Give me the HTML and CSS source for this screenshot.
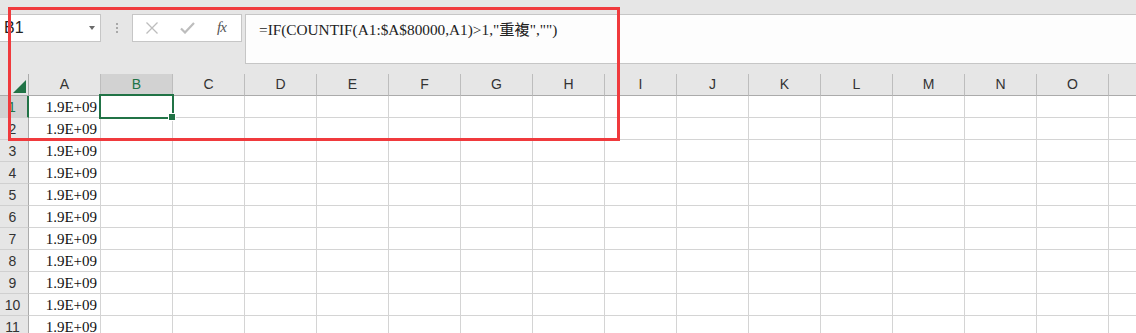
FILE: index.html
```html
<!DOCTYPE html>
<html lang="zh-Hant">
<head>
<meta charset="utf-8">
<title>Excel</title>
<link rel="stylesheet" href="styles.css">
</head>
<body>
<div class="app">
  <div class="fbar">
    <div class="namebox">
      <span class="name">B1</span>
      <span class="caret"></span>
    </div>
    <div class="grip"><i></i><i></i><i></i></div>
    <div class="btns">
      <svg class="ic" width="14" height="12" viewBox="0 0 14 12"><path d="M1.5 0.5 L12.5 11.5 M12.5 0.5 L1.5 11.5" stroke="#bdbdbd" stroke-width="1.3" fill="none"/></svg>
      <svg class="ic" width="15" height="12" viewBox="0 0 15 12"><path d="M1 6.5 L5 10.5 L14 1" stroke="#bdbdbd" stroke-width="2.2" fill="none"/></svg>
      <span class="fx">fx</span>
    </div>
    <div class="formula">=IF(COUNTIF(A1:$A$80000,A1)&gt;1,"重複","")</div>
  </div>
  <div class="sheet">
    <div class="corner"><svg width="13" height="13" viewBox="0 0 13 13"><path d="M13 0 L13 13 L0 13 Z" fill="#217346"/></svg></div>
    <div class="ch">A</div><div class="ch sel">B</div><div class="ch">C</div><div class="ch">D</div><div class="ch">E</div><div class="ch">F</div><div class="ch">G</div><div class="ch">H</div><div class="ch">I</div><div class="ch">J</div><div class="ch">K</div><div class="ch">L</div><div class="ch">M</div><div class="ch">N</div><div class="ch">O</div><div class="ch"></div>

    <div class="rh sel">1</div><div class="c num">1.9E+09</div><div class="c"></div><div class="c"></div><div class="c"></div><div class="c"></div><div class="c"></div><div class="c"></div><div class="c"></div><div class="c"></div><div class="c"></div><div class="c"></div><div class="c"></div><div class="c"></div><div class="c"></div><div class="c"></div><div class="c"></div>
    <div class="rh">2</div><div class="c num">1.9E+09</div><div class="c"></div><div class="c"></div><div class="c"></div><div class="c"></div><div class="c"></div><div class="c"></div><div class="c"></div><div class="c"></div><div class="c"></div><div class="c"></div><div class="c"></div><div class="c"></div><div class="c"></div><div class="c"></div><div class="c"></div>
    <div class="rh">3</div><div class="c num">1.9E+09</div><div class="c"></div><div class="c"></div><div class="c"></div><div class="c"></div><div class="c"></div><div class="c"></div><div class="c"></div><div class="c"></div><div class="c"></div><div class="c"></div><div class="c"></div><div class="c"></div><div class="c"></div><div class="c"></div><div class="c"></div>
    <div class="rh">4</div><div class="c num">1.9E+09</div><div class="c"></div><div class="c"></div><div class="c"></div><div class="c"></div><div class="c"></div><div class="c"></div><div class="c"></div><div class="c"></div><div class="c"></div><div class="c"></div><div class="c"></div><div class="c"></div><div class="c"></div><div class="c"></div><div class="c"></div>
    <div class="rh">5</div><div class="c num">1.9E+09</div><div class="c"></div><div class="c"></div><div class="c"></div><div class="c"></div><div class="c"></div><div class="c"></div><div class="c"></div><div class="c"></div><div class="c"></div><div class="c"></div><div class="c"></div><div class="c"></div><div class="c"></div><div class="c"></div><div class="c"></div>
    <div class="rh">6</div><div class="c num">1.9E+09</div><div class="c"></div><div class="c"></div><div class="c"></div><div class="c"></div><div class="c"></div><div class="c"></div><div class="c"></div><div class="c"></div><div class="c"></div><div class="c"></div><div class="c"></div><div class="c"></div><div class="c"></div><div class="c"></div><div class="c"></div>
    <div class="rh">7</div><div class="c num">1.9E+09</div><div class="c"></div><div class="c"></div><div class="c"></div><div class="c"></div><div class="c"></div><div class="c"></div><div class="c"></div><div class="c"></div><div class="c"></div><div class="c"></div><div class="c"></div><div class="c"></div><div class="c"></div><div class="c"></div><div class="c"></div>
    <div class="rh">8</div><div class="c num">1.9E+09</div><div class="c"></div><div class="c"></div><div class="c"></div><div class="c"></div><div class="c"></div><div class="c"></div><div class="c"></div><div class="c"></div><div class="c"></div><div class="c"></div><div class="c"></div><div class="c"></div><div class="c"></div><div class="c"></div><div class="c"></div>
    <div class="rh">9</div><div class="c num">1.9E+09</div><div class="c"></div><div class="c"></div><div class="c"></div><div class="c"></div><div class="c"></div><div class="c"></div><div class="c"></div><div class="c"></div><div class="c"></div><div class="c"></div><div class="c"></div><div class="c"></div><div class="c"></div><div class="c"></div><div class="c"></div>
    <div class="rh">10</div><div class="c num">1.9E+09</div><div class="c"></div><div class="c"></div><div class="c"></div><div class="c"></div><div class="c"></div><div class="c"></div><div class="c"></div><div class="c"></div><div class="c"></div><div class="c"></div><div class="c"></div><div class="c"></div><div class="c"></div><div class="c"></div><div class="c"></div>
    <div class="rh">11</div><div class="c num">1.9E+09</div><div class="c"></div><div class="c"></div><div class="c"></div><div class="c"></div><div class="c"></div><div class="c"></div><div class="c"></div><div class="c"></div><div class="c"></div><div class="c"></div><div class="c"></div><div class="c"></div><div class="c"></div><div class="c"></div><div class="c"></div>
  </div>
  <div class="selection"><span class="handle"></span></div>
  <div class="highlight"></div>
</div>
</body>
</html>
```

FILE: styles.css
```css
html, body {
  margin: 0;
  padding: 0;
  background: #ffffff;
  overflow: hidden;
}
.app {
  position: relative;
  width: 1136px;
  height: 333px;
  overflow: hidden;
  font-family: "Liberation Sans", Arial, sans-serif;
}
.fbar {
  height: 74px;
  background: #e6e6e6;
  display: flex;
  align-items: flex-start;
  padding-top: 14px;
  box-sizing: border-box;
}
.namebox {
  box-sizing: border-box;
  width: 102px;
  height: 28px;
  margin-left: -1px;
  background: #ffffff;
  border: 1px solid #c6c6c6;
  display: flex;
  align-items: center;
  justify-content: space-between;
  padding: 0 5px 0 4px;
}
.name {
  font-family: "Liberation Sans", Arial, sans-serif;
  font-size: 16px;
  color: #222;
}
.caret {
  width: 0;
  height: 0;
  border-left: 3.5px solid transparent;
  border-right: 3.5px solid transparent;
  border-top: 4px solid #6a6a6a;
  margin-top: -1px;
}
.grip {
  width: 31px;
  height: 28px;
  display: flex;
  flex-direction: column;
  align-items: center;
  justify-content: center;
  gap: 2px;
}
.grip i {
  display: block;
  width: 2px;
  height: 2px;
  background: #a8a8a8;
}
.btns {
  box-sizing: border-box;
  width: 110px;
  height: 28px;
  background: #ffffff;
  border: 1px solid #c6c6c6;
  display: flex;
  align-items: center;
  padding: 0 0 0 12px;
}
.btns .ic:nth-child(1) { margin-right: 21px; }
.btns .ic:nth-child(2) { margin-right: 22px; }
.fx {
  font-family: "Liberation Serif", "Times New Roman", serif;
  font-style: italic;
  font-size: 15px;
  color: #555;
  letter-spacing: -1px;
  margin-top: -2px;
}
.formula {
  box-sizing: border-box;
  flex: 1;
  margin-left: 3px;
  height: 50px;
  background: #fdfdfd;
  border: 1px solid #c6c6c6;
  border-right: none;
  padding: 5px 0 0 13px;
  font-family: "Liberation Serif", "Noto Sans CJK TC", serif;
  font-size: 15.3px;
  line-height: 20px;
  color: #222;
  white-space: nowrap;
}
.sheet {
  display: grid;
  grid-template-columns: 29px repeat(16, 72px);
  grid-auto-rows: 22px;
}
.corner, .ch, .rh, .c {
  box-sizing: border-box;
}
.corner {
  background: #e6e6e6;
  border-right: 1px solid #ababab;
  border-bottom: 1px solid #ababab;
  display: flex;
  align-items: flex-end;
  justify-content: flex-end;
  padding: 0 2px 2px 0;
}
.corner svg { display: block; }
.ch {
  background: #e6e6e6;
  border-right: 1px solid #bdbdbd;
  border-bottom: 1px solid #ababab;
  text-align: center;
  font-size: 14px;
  line-height: 21px;
  color: #333;
}
.ch.sel {
  background: #d2d2d2;
  color: #217346;
  border-bottom: 2px solid #217346;
}
.rh {
  background: #e6e6e6;
  border-right: 1px solid #ababab;
  border-bottom: 1px solid #d0d0d0;
  text-align: center;
  padding-right: 3px;
  font-size: 14px;
  line-height: 22px;
  color: #333;
}
.rh.sel {
  background: #d2d2d2;
  color: #217346;
  border-right: 2px solid #217346;
}
.c {
  background: #ffffff;
  border-right: 1px solid #d4d4d4;
  border-bottom: 1px solid #d4d4d4;
}
.num {
  text-align: right;
  padding-right: 3px;
  padding-top: 1px;
  font-family: "Liberation Serif", "Times New Roman", serif;
  font-size: 15px;
  line-height: 20px;
  color: #111;
  white-space: nowrap;
}
.selection {
  position: absolute;
  left: 99px;
  top: 94px;
  width: 75px;
  height: 25px;
  box-sizing: border-box;
  border: 2px solid #217346;
}
.handle {
  position: absolute;
  right: -3px;
  bottom: -3px;
  width: 6px;
  height: 6px;
  background: #217346;
  box-shadow: 0 0 0 1px #ffffff;
}
.highlight {
  position: absolute;
  left: 8px;
  top: 7px;
  width: 612px;
  height: 134px;
  box-sizing: border-box;
  border: 3px solid #f03a3d;
}
```
